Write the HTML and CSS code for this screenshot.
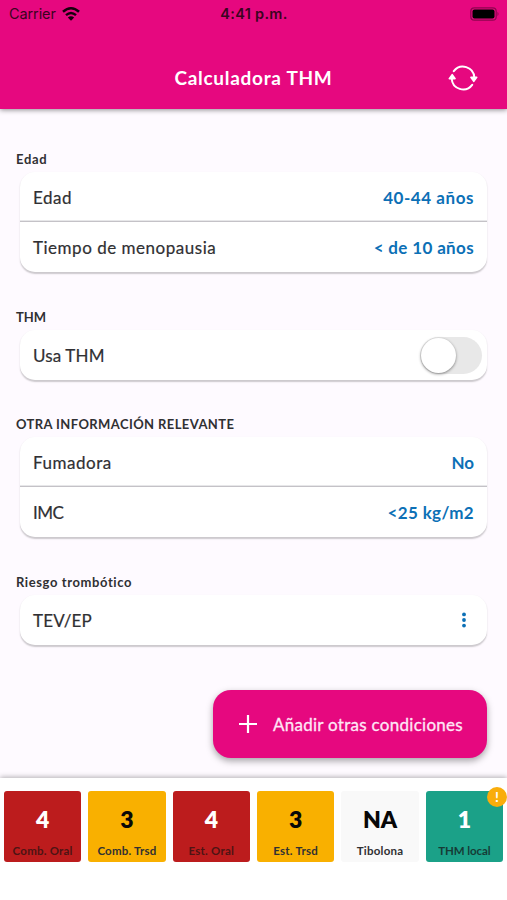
FILE: index.html
```html
<!DOCTYPE html>
<html lang="es">
<head>
<meta charset="utf-8">
<meta name="viewport" content="width=device-width">
<title>Calculadora THM</title>
<link rel="stylesheet" href="styles.css">
</head>
<body>
<header class="header">
  <div class="status">
    <div class="carrier"><span class="carrier-name">Carrier</span>
      <svg class="wifi" viewBox="0 0 18 14" fill="none" stroke="currentColor" stroke-width="2.5"><path d="M1 4.8Q9-2.2 17 4.8M4 8.1Q9 3.8 14 8.1"/><path d="M9 13.8 5.8 10.5Q9 7.9 12.2 10.5Z" fill="currentColor" stroke="none"/></svg>
    </div>
    <span class="time">4:41 p.m.</span>
    <svg class="battery" viewBox="0 0 30 14"><rect x=".8" y=".8" width="25.4" height="12.4" rx="3.5" fill="none" stroke="#000" stroke-opacity=".38" stroke-width="1.2"/><rect x="2.5" y="2.5" width="22" height="9" rx="2" fill="#000"/><path d="M27.5 4.8Q29.5 7 27.5 9.2Z" fill="#000" fill-opacity=".4"/></svg>
  </div>
  <div class="titlebar">
    <h1 class="title">Calculadora THM</h1>
    <svg class="refresh" viewBox="0 0 30 26" fill="none" stroke="#fff" stroke-width="2" stroke-linecap="round"><path d="M5.8 6.2A11.4 11.4 0 0 1 26.3 12.5"/><path d="M24.2 19.8A11.4 11.4 0 0 1 3.7 13.5"/><path d="M22.9 12.4h5.8L25.8 16.4ZM1.3 13.6h5.8L4.2 9.6Z" fill="#fff" stroke-linejoin="round" stroke-width="1.6"/></svg>
  </div>
</header>
<main class="content">
  <section class="section">
    <h2 class="label l-edad">Edad</h2>
    <div class="card">
      <div class="row"><span class="name">Edad</span><span class="value v-age">40-44 años</span></div>
      <div class="row"><span class="name">Tiempo de menopausia</span><span class="value">&lt; de 10 años</span></div>
    </div>
  </section>
  <section class="section">
    <h2 class="label l-thm">THM</h2>
    <div class="card">
      <div class="row"><span class="name n-caps">Usa THM</span><span class="switch"><span class="knob"></span></span></div>
    </div>
  </section>
  <section class="section">
    <h2 class="label">OTRA INFORMACIÓN RELEVANTE</h2>
    <div class="card">
      <div class="row"><span class="name">Fumadora</span><span class="value v-no">No</span></div>
      <div class="row"><span class="name n-imc">IMC</span><span class="value">&lt;25 kg/m2</span></div>
    </div>
  </section>
  <section class="section">
    <h2 class="label l-riesgo">Riesgo trombótico</h2>
    <div class="card">
      <div class="row"><span class="name n-caps">TEV/EP</span><svg class="dots" viewBox="0 0 4 16" fill="#0c70b6"><circle cx="2" cy="2.4" r="1.9"/><circle cx="2" cy="8" r="1.9"/><circle cx="2" cy="13.6" r="1.9"/></svg></div>
    </div>
  </section>
  <button class="add"><svg class="plus" viewBox="0 0 18 18" stroke="#fff" stroke-width="2.2"><path d="M9 0v18M0 9h18"/></svg><span>Añadir otras condiciones</span></button>
</main>
<footer class="results">
  <div class="tile red"><b>4</b><span>Comb. Oral</span></div>
  <div class="tile amber"><b>3</b><span>Comb. Trsd</span></div>
  <div class="tile red"><b>4</b><span>Est. Oral</span></div>
  <div class="tile amber"><b>3</b><span>Est. Trsd</span></div>
  <div class="tile gray"><b>NA</b><span>Tibolona</span></div>
  <div class="tile green"><b>1</b><span>THM local</span><i class="badge">!</i></div>
</footer>
</body>
</html>
```

FILE: styles.css
```css
* { box-sizing: border-box; }
body {
  margin: 0;
  height: 900px;
  display: flex;
  flex-direction: column;
  overflow: hidden;
  background: #fefaff;
  color: #303033;
  font-family: Lato, "Liberation Sans", sans-serif;
}
.header {
  position: relative;
  height: 109px;
  flex: none;
  background: #e6087f;
  box-shadow: 0 1px 5px rgba(0, 0, 0, .45);
}
.status {
  height: 27px;
  display: grid;
  grid-template-columns: 1fr auto 1fr;
  align-items: center;
  padding: 0 8px 0 9px;
  color: #3a0420;
  font-family: Inter, sans-serif;
  font-size: 14.5px;
}
.carrier { display: flex; align-items: center; gap: 6px; }
.carrier-name { letter-spacing: -.1px; }
.wifi { width: 18px; height: 14px; color: #16000c; }
.time { font-weight: 600; letter-spacing: .3px; }
.battery { width: 30px; height: 14px; justify-self: end; margin-right: -1px; }
.titlebar {
  height: 102px;
  display: grid;
  grid-template-columns: 1fr auto 1fr;
  align-items: center;
  padding: 0 29px;
}
.title {
  grid-column: 2;
  margin: 0;
  color: #fff;
  font-size: 19px;
  line-height: 24px;
  font-weight: 700;
  letter-spacing: .7px;
  padding-bottom: 1px;
}
.refresh { width: 30px; height: 26px; justify-self: end; }
.content {
  flex: 1;
  min-height: 0;
  padding: 40px 20px 0;
  display: flex;
  flex-direction: column;
}
.section { margin-bottom: 34.5px; }
.label {
  margin: 0 0 3px -4px;
  height: 20px;
  line-height: 20px;
  font-size: 13px;
  font-weight: 700;
  letter-spacing: .4px;
}
.l-edad { letter-spacing: .7px; }
.l-thm { letter-spacing: 0; }
.l-riesgo { letter-spacing: .6px; }
.card {
  background: #fff;
  border-radius: 15px;
  box-shadow: 0 1.5px 1.5px rgba(0, 0, 0, .2);
}
.row {
  height: 50px;
  padding: 1px 13px 0;
  display: flex;
  align-items: center;
  justify-content: space-between;
}
.row + .row { box-shadow: 0 -1px #c4c2c7, 0 -2px rgba(196, 194, 199, .4); }
.name { font-size: 17px; letter-spacing: .52px; -webkit-text-stroke: .2px #303033; }
.n-caps { letter-spacing: .15px; }
.n-imc { letter-spacing: -.5px; }
.value { color: #0c70b6; font-size: 17px; font-weight: 700; letter-spacing: .35px; }
.v-age { letter-spacing: .55px; }
.v-no { letter-spacing: 0; }
.switch {
  width: 62px;
  height: 37px;
  margin-right: -8px;
  border-radius: 19px;
  background: #e8e8e8;
}
.knob {
  display: block;
  width: 35px;
  height: 35px;
  margin: 1px;
  border-radius: 50%;
  background: #fff;
  box-shadow: 0 1px 3px rgba(0, 0, 0, .45);
}
.dots { width: 4px; height: 16px; margin-right: 8px; }
.add {
  align-self: flex-end;
  width: 274px;
  height: 68px;
  flex: none;
  margin-top: 11px;
  padding: 0 24px 0 26px;
  display: flex;
  align-items: center;
  justify-content: space-between;
  border: 0;
  border-radius: 18px;
  background: #e6087f;
  color: #ffe6f6;
  font: 400 17px Lato, sans-serif;
  letter-spacing: .28px;
  -webkit-text-stroke: .3px #ffe6f6;
  box-shadow: 0 3px 7px rgba(0, 0, 0, .35);
}
.plus { width: 18px; height: 18px; }
.results {
  position: relative;
  height: 122px;
  flex: none;
  padding: 13px 4px 0;
  display: grid;
  grid-template-columns: repeat(6, 1fr);
  gap: 7px;
  background: #fff;
  box-shadow: 0 -1px 5px rgba(0, 0, 0, .3);
}
.tile {
  position: relative;
  height: 71px;
  border-radius: 3px;
  display: flex;
  flex-direction: column;
  align-items: center;
}
.tile b { margin-top: 14px; font-size: 23px; line-height: 28px; font-weight: 800; }
.tile span {
  margin-top: 10px;
  font-size: 11.5px;
  line-height: 16px;
  font-weight: 700;
  letter-spacing: .22px;
  white-space: nowrap;
}
.red { background: #bc1c1d; }
.red b, .green b { color: #fff; }
.red span { color: #4d1414; }
.amber { background: #f9b000; }
.amber b, .gray b { color: #080808; }
.gray { background: #f9f9f9; }
.green { background: #1ba188; }
.green span { color: #163c36; letter-spacing: -.1px; }
.badge {
  position: absolute;
  top: -4px;
  right: -4px;
  width: 20px;
  height: 20px;
  border-radius: 50%;
  background: #f9ad0b;
  color: #fff;
  font: 700 14px/20px Lato, sans-serif;
  text-align: center;
}
```
